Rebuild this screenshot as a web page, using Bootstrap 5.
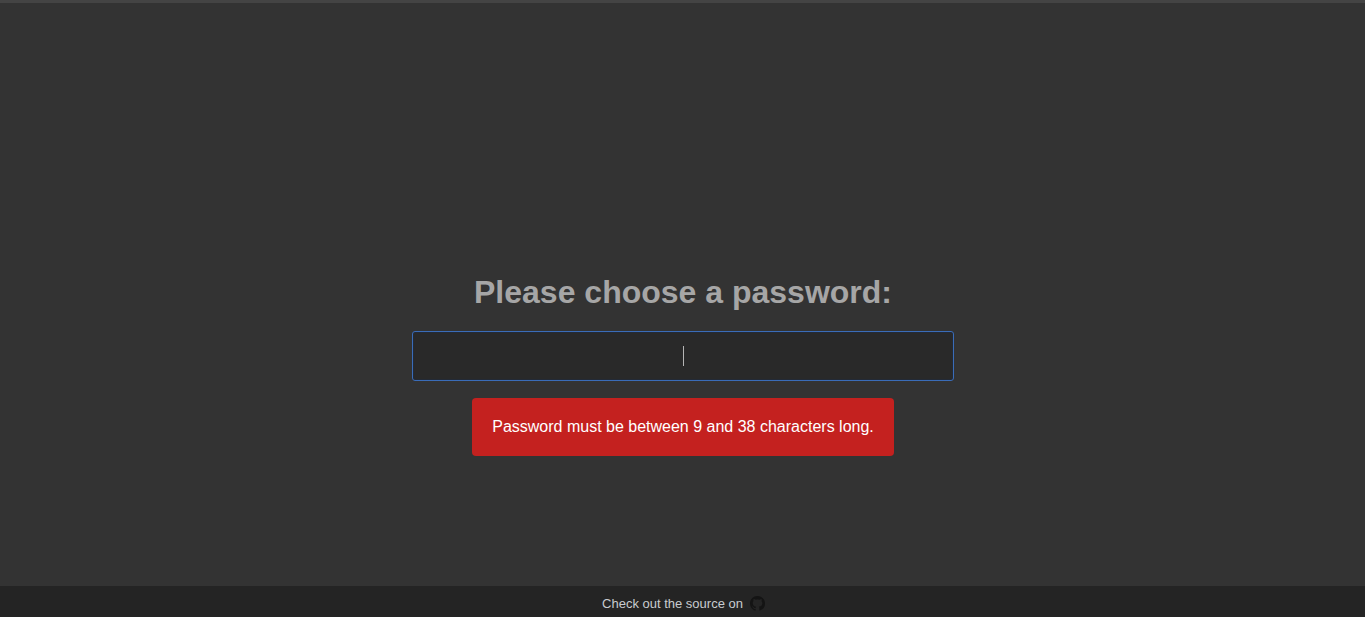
<!DOCTYPE html>
<html lang="en">
<head>
<meta charset="utf-8">
<title>Password</title>
<link href="https://cdn.jsdelivr.net/npm/bootstrap@5.3.0/dist/css/bootstrap.min.css" rel="stylesheet">
<style>
html, body { height: 100%; }
body { background: #333333; font-family: "Liberation Sans", Arial, sans-serif; overflow: hidden; }
.page-wrap { height: 617px; border-top: 3px solid #444444; padding-left: 1px; }
.page-main { padding-top: 270px; }
.pw-title { font-family: "Liberation Sans", Arial, sans-serif; font-size: 32px; font-weight: 700; line-height: 38px; color: #a6a6a6; margin: 0 0 20px; }
.pw-box { width: 542px; height: 50px; }
.pw-input, .pw-input:focus { width: 100%; height: 100%; background: #292929; border: 1px solid #3a6cb8; border-radius: 3px; color: #fff; caret-color: transparent; text-align: center; box-shadow: inset 0 0 0 1px #232a36; outline: 0; }
.pw-caret { position: absolute; left: 271px; top: 15px; width: 1px; height: 20px; background: #b5b5b5; }
.pw-alert { background: #c4211f; color: #fff; font-size: 16px; line-height: 18px; padding: 20px; border-radius: 4px; margin-top: 17px; }
.page-foot { height: 31px; margin-left: -1px; padding: 4px 0 0 2px; background: #242424; color: #c8ccd0; font-size: 13px; }
.gh-mark { width: 15px; height: 15px; fill: #141414; margin-left: 7px; }
</style>
</head>
<body>
<div class="page-wrap d-flex flex-column">
  <main class="page-main flex-grow-1 d-flex flex-column align-items-center">
    <h1 class="pw-title">Please choose a password:</h1>
    <div class="pw-box position-relative">
      <input class="pw-input" type="password" aria-label="Password">
      <span class="pw-caret"></span>
    </div>
    <div class="pw-alert">Password must be between 9 and 38 characters long.</div>
  </main>
  <footer class="page-foot d-flex align-items-center justify-content-center">
    <span>Check out the source on</span>
    <svg class="gh-mark" viewBox="0 0 16 16" aria-hidden="true"><path d="M8 0C3.58 0 0 3.58 0 8c0 3.54 2.29 6.53 5.47 7.59.4.07.55-.17.55-.38 0-.19-.01-.82-.01-1.49-2.01.37-2.53-.49-2.69-.94-.09-.23-.48-.94-.82-1.13-.28-.15-.68-.52-.01-.53.63-.01 1.08.58 1.23.82.72 1.21 1.87.87 2.33.66.07-.52.28-.87.51-1.07-1.78-.2-3.64-.89-3.64-3.95 0-.87.31-1.59.82-2.15-.08-.2-.36-1.02.08-2.12 0 0 .67-.21 2.2.82.64-.18 1.32-.27 2-.27s1.36.09 2 .27c1.53-1.04 2.2-.82 2.2-.82.44 1.1.16 1.92.08 2.12.51.56.82 1.27.82 2.15 0 3.07-1.87 3.75-3.65 3.95.29.25.54.73.54 1.48 0 1.07-.01 1.93-.01 2.2 0 .21.15.46.55.38A8.01 8.01 0 0 0 16 8c0-4.42-3.58-8-8-8z"/></svg>
  </footer>
</div>
<script src="https://cdn.jsdelivr.net/npm/bootstrap@5.3.0/dist/js/bootstrap.bundle.min.js"></script>
</body>
</html>
